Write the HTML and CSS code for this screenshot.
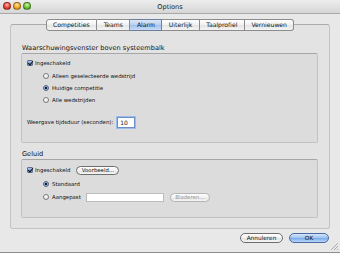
FILE: index.html
```html
<!DOCTYPE html>
<html lang="nl">
<head>
  <meta charset="UTF-8">
  <title>Options</title>
  <link rel="stylesheet" href="styles.css">
</head>
<body>
  <div class="window">
    <div class="titlebar">
      <div class="lights">
        <span class="light red"></span>
        <span class="light yellow"></span>
        <span class="light green"></span>
      </div>
      <div class="title">Options</div>
    </div>

    <div class="content">
      <div class="tabs">
        <div class="tab">Competities</div>
        <div class="tab">Teams</div>
        <div class="tab active">Alarm</div>
        <div class="tab">Uiterlijk</div>
        <div class="tab">Taalprofiel</div>
        <div class="tab">Vernieuwen</div>
      </div>

      <div class="tabbox">
        <div class="section-title">Waarschuwingsvenster boven systeembalk</div>
        <div class="group group-alarm">
          <div class="row">
            <span class="check"></span>
            <span>Ingeschakeld</span>
          </div>
          <div class="options">
            <div class="row">
              <span class="radio"></span>
              <span>Alleen geselecteerde wedstrijd</span>
            </div>
            <div class="row">
              <span class="radio on"></span>
              <span>Huidige competitie</span>
            </div>
            <div class="row">
              <span class="radio"></span>
              <span>Alle wedstrijden</span>
            </div>
          </div>
          <div class="row duration">
            <span>Weergave tijdsduur (seconden):</span>
            <span class="field focus">10</span>
          </div>
        </div>

        <div class="section-title second">Geluid</div>
        <div class="group group-sound">
          <div class="row">
            <span class="check"></span>
            <span>Ingeschakeld</span>
            <span class="pill preview">Voorbeeld...</span>
          </div>
          <div class="options">
            <div class="row">
              <span class="radio on"></span>
              <span>Standaard</span>
            </div>
            <div class="row">
              <span class="radio"></span>
              <span>Aangepast</span>
              <span class="field path"></span>
              <span class="pill disabled">Bladeren...</span>
            </div>
          </div>
        </div>
      </div>

      <div class="actions">
        <span class="pill cancel">Annuleren</span>
        <span class="pill ok">OK</span>
      </div>
    </div>

    <svg class="grip" width="9" height="9" viewBox="0 0 9 9">
      <line x1="8" y1="1" x2="1" y2="8" stroke="#9a9a9a" stroke-width="0.8"/>
      <line x1="8" y1="4" x2="4" y2="8" stroke="#9a9a9a" stroke-width="0.8"/>
      <line x1="8" y1="7" x2="7" y2="8" stroke="#9a9a9a" stroke-width="0.8"/>
    </svg>
  </div>
</body>
</html>
```

FILE: styles.css
```css
* {
  margin: 0;
  padding: 0;
  box-sizing: border-box;
}

:root {
  --window-bg: #e8e8e8;
  --box-bg: #e3e3e3;
  --group-bg: #dcdcdc;
  --line: #b4b4b4;
  --text: #111;
}

body {
  font-family: 'DejaVu Sans', sans-serif;
  font-size: 5.4px;
  color: var(--text);
  background: var(--window-bg);
  width: 340px;
  height: 253px;
  overflow: hidden;
}

.window {
  position: relative;
  height: 253px;
  border-bottom: 1px solid #8c8c8c;
}

/* Title bar */
.titlebar {
  height: 14px;
  display: flex;
  align-items: center;
  justify-content: center;
  position: relative;
  background: linear-gradient(#ededed, #d6d6d6);
  border-bottom: 1px solid #a8a8a8;
}

.lights {
  position: absolute;
  left: 3px;
  top: 2px;
  display: flex;
  gap: 2px;
}

.light {
  width: 8px;
  height: 8px;
  border-radius: 50%;
  border: 0.5px solid rgba(0, 0, 0, 0.35);
}

.light.red {
  background: radial-gradient(circle at 50% 30%, #ffb8b0 0, #e8463c 55%, #b81f16 100%);
}

.light.yellow {
  background: radial-gradient(circle at 50% 30%, #ffe8a8 0, #f1a726 55%, #c77a08 100%);
}

.light.green {
  background: radial-gradient(circle at 50% 30%, #d8f5b0 0, #6ec23a 55%, #3f8d18 100%);
}

.title {
  font-size: 6.6px;
  color: #222;
}

/* Tabs */
.content {
  padding: 0 10px;
}

.tabs {
  position: relative;
  z-index: 1;
  display: flex;
  justify-content: center;
  margin-top: 5px;
  height: 12px;
}

.tab {
  font-size: 6.1px;
  padding: 0 6.5px;
  line-height: 10px;
  background: linear-gradient(#ffffff, #f0f0f0 50%, #e4e4e4 51%, #f4f4f4);
  border: 1px solid #8c8c8c;
  border-left: none;
}

.tab:first-child {
  border-left: 1px solid #8c8c8c;
  border-radius: 3px 0 0 3px;
}

.tab:last-child {
  border-radius: 0 3px 3px 0;
}

.tab.active {
  background: linear-gradient(#dbe8f8, #b7d0f0 50%, #9ec0ee 51%, #c7dcf6);
  border-color: #6f7f99;
}

.tabbox {
  margin-top: -7px;
  height: 205px;
  background: var(--box-bg);
  border: 1px solid #c4c4c4;
  border-top-color: #aaaaaa;
  border-radius: 3px;
  padding: 19px 11px 0 10px;
}

.section-title {
  font-size: 6.6px;
  line-height: 8px;
  margin: 0 0 1px 1px;
}

.section-title.second {
  margin-top: 7px;
}

.group {
  background: var(--group-bg);
  border: 1px solid #c2c2c2;
  border-top-color: #a6a6a6;
  border-radius: 2px;
  padding: 4px 0 0 5px;
}

.group-alarm {
  height: 90px;
}

.group-sound {
  height: 59px;
  padding-top: 5px;
}

.row {
  display: flex;
  align-items: center;
  gap: 2px;
  height: 10px;
}

.options {
  padding-left: 16px;
  display: flex;
  flex-direction: column;
  gap: 2px;
  margin-top: 3px;
}

.group-sound .options {
  margin-top: 4px;
  gap: 3px;
}

.duration {
  margin-top: 11px;
  height: 12px;
  gap: 4px;
}

/* Controls */
.check {
  width: 6px;
  height: 6px;
  border: 1px solid #5f6f8f;
  border-radius: 1px;
  background: linear-gradient(#a9c6ef, #5d8fd8);
  position: relative;
}

.check::after {
  content: '';
  position: absolute;
  left: 1px;
  top: -1px;
  width: 2px;
  height: 4px;
  border: solid #111;
  border-width: 0 1px 1px 0;
  transform: rotate(40deg);
}

.radio {
  width: 6px;
  height: 6px;
  border-radius: 50%;
  border: 0.8px solid #7a7a7a;
  background: linear-gradient(#ffffff, #e6e6e6);
  margin-right: 1px;
}

.radio.on {
  border-color: #4f6288;
  background: radial-gradient(circle, #1a1a2a 0, #1a1a2a 28%, #7ea6e0 34%, #aac8f0 100%);
}

.field {
  background: #fff;
  border: 1px solid #9a9a9a;
  border-top-color: #7a7a7a;
  line-height: 9px;
}

.field.focus {
  width: 18px;
  height: 11px;
  padding-left: 2px;
  font-size: 6px;
  border: 1px solid #6c8fc9;
  box-shadow: 0 0 0 1px #9bbbe8;
}

.field.path {
  width: 78px;
  height: 9px;
  margin-left: 3px;
  border-color: #bcbcbc;
}

.pill {
  display: inline-flex;
  align-items: center;
  justify-content: center;
  height: 9px;
  border-radius: 5px;
  border: 1px solid #6e6e6e;
  background: linear-gradient(#ffffff, #f2f2f2 50%, #e2e2e2 51%, #f6f6f6);
  font-size: 5.4px;
}

.preview {
  width: 43px;
  margin-left: 4px;
}

.disabled {
  width: 40px;
  margin-left: 4px;
  color: #9a9a9a;
  border-color: #b4b4b4;
}

.actions {
  display: flex;
  justify-content: flex-end;
  gap: 6px;
  margin-top: 4px;
  padding-right: 1px;
}

.cancel {
  width: 43px;
  height: 10px;
  font-size: 5.8px;
}

.ok {
  width: 40px;
  height: 10px;
  font-size: 5.8px;
  border-color: #4b6aa4;
  background: linear-gradient(#d5e6fa, #9cc2f0 50%, #78a9ea 51%, #b9d7f8);
}

.grip {
  position: absolute;
  right: 1px;
  bottom: 1px;
}
```
